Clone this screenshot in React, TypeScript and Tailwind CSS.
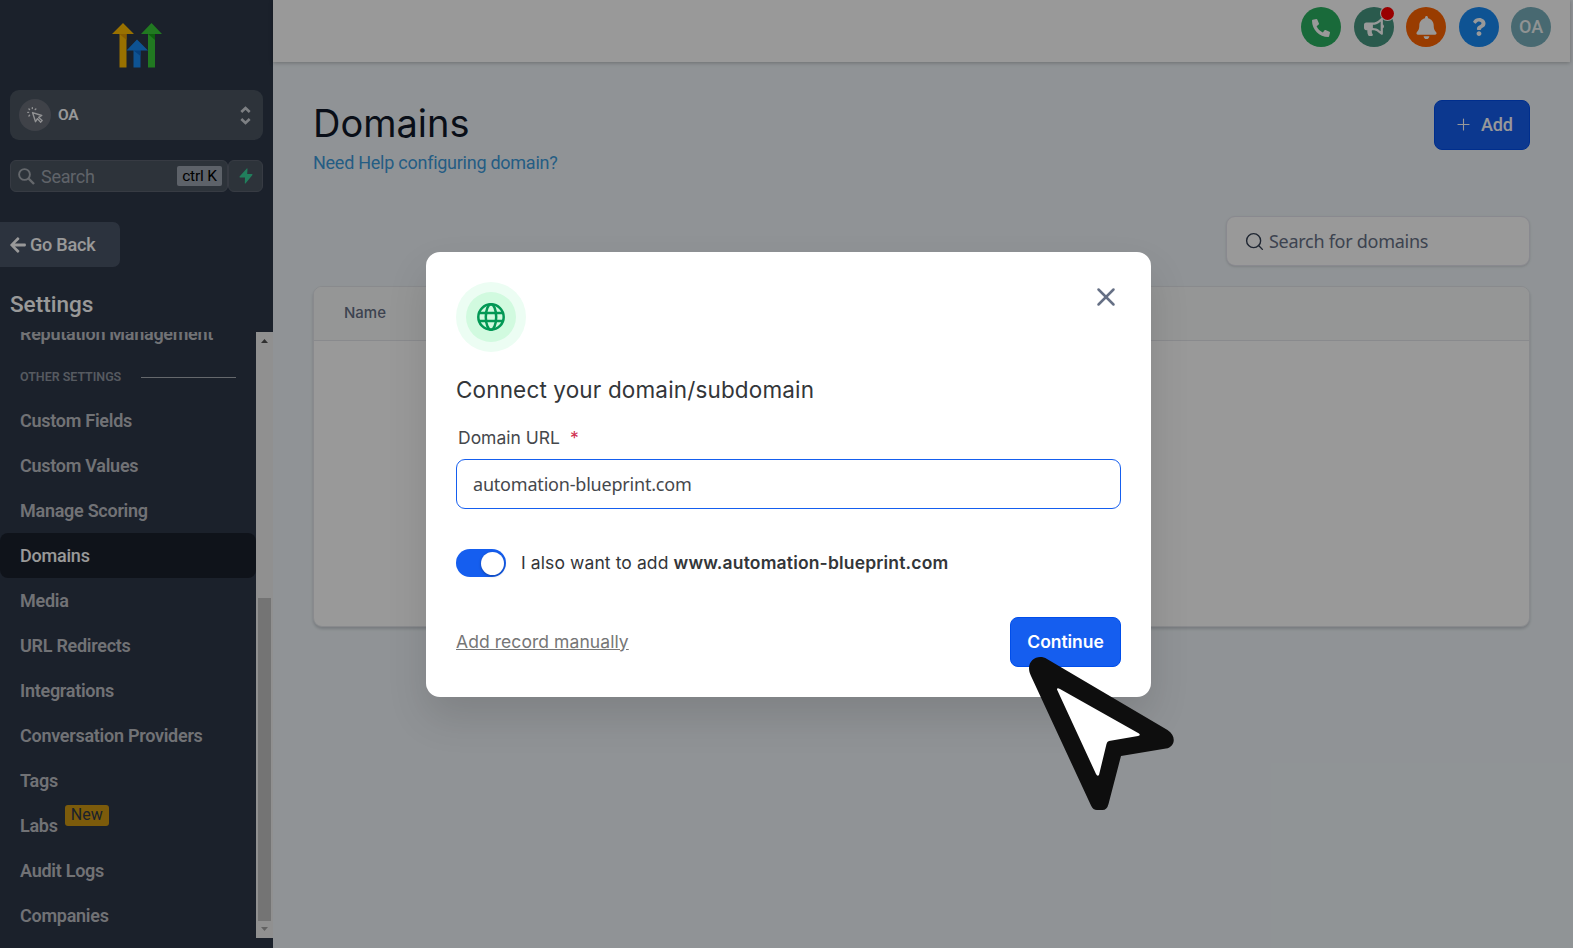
import React from "react";
import { FaArrowLeft, FaBell, FaBullhorn, FaPhone, FaQuestion } from "react-icons/fa";
import { Plus, Search, X } from "lucide-react";

const items = [
  "Custom Fields",
  "Custom Values",
  "Manage Scoring",
  "Domains",
  "Media",
  "URL Redirects",
  "Integrations",
  "Conversation Providers",
  "Tags",
  "Labs",
  "Audit Logs",
  "Companies",
];

function Logo() {
  return (
    <svg width="50" height="46" viewBox="0 0 50 46">
      <path d="M11 0 L22 11 H14.5 V44.500 H7.5 V11 H0 Z" fill="#ffbc00" />
      <path d="M7.5 11 H14.5 V17 Z" fill="#e39a00" />
      <path d="M39.5 0 L50 11 H43 V44.500 H36 V11 H29 Z" fill="#37ca37" />
      <path d="M36 11 H43 V17 Z" fill="#16a018" />
      <path d="M25 16.5 L36 27.5 H28.5 V44.500 H21.5 V27.5 H14.5 Z" fill="#188bf6" />
      <path d="M21.5 27.5 H28.5 V33 Z" fill="#0b6bd0" />
    </svg>
  );
}

function Sidebar() {
  return (
    <aside className="flex h-full w-[273px] shrink-0 flex-col bg-[#2d3748] font-[Roboto,sans-serif]">
      <div className="flex h-[90px] shrink-0 justify-center pt-[23px]">
        <Logo />
      </div>
      <div className="mx-[10px] flex h-[50px] shrink-0 items-center rounded-[9px] bg-[#4b5662] pl-[9px] pr-3">
        <div className="flex size-8 items-center justify-center rounded-full bg-[#696e79]">
          <svg width="16" height="16" viewBox="0 0 15 15" fill="none" stroke="#f3f4f6" strokeWidth="1.300" strokeLinecap="round" strokeLinejoin="round">
            <path d="M5.200 5.200 L13.800 8 L11 9.8 L14.2 12.7 L12.7 14.2 L9.8 11 L8 13.800 Z" />
            <path d="M5 .7v.8M1.800 1.8l.6.6M.7 5h.8M1.8 8.4l.6-.6M8.3 1.8l-.6.6" />
          </svg>
        </div>
        <span className="ml-[7px] mt-px flex-1 text-[15.5px] font-semibold tracking-[-0.2px] text-white">OA</span>
        <svg width="11" height="19" viewBox="0 0 11 19" fill="none" stroke="#d1d5db" strokeWidth="2.6">
          <path d="M1.3 6 L5.5 2 L9.7 6 M1.3 13 L5.5 17 L9.7 13" />
        </svg>
      </div>
      <div className="mx-[10px] mt-5 flex h-8 shrink-0">
        <div className="flex flex-1 items-center rounded-md border border-[#5c6370] bg-[#4b5662] pl-[7px] pr-[5px]">
          <svg width="17" height="17" viewBox="0 0 17 17" fill="none" stroke="#a9adb5" strokeWidth="1.900">
            <circle cx="6.500" cy="6.500" r="5.400" />
            <path d="M10.500 10.500 L16 16" strokeWidth="2.400" />
          </svg>
          <span className="ml-[6px] flex-1 text-[18px] tracking-[-0.3px] text-[#a0a6b0]">Search</span>
          <span className="flex h-5 w-[45px] items-center justify-center rounded-[2px] bg-[#9ca3af] pt-px text-[15.5px] tracking-[-0.2px] text-black">ctrl K</span>
        </div>
        <div className="flex w-[35px] items-center justify-center rounded-md border border-[#5c6370] bg-[#4b5662]">
          <svg width="14" height="16" viewBox="0 0 14 16">
            <path d="M7.800 .4 L.6 8.600 Q.2 9.500 1.200 9.600 H6 L5.800 15.200 Q6 15.800 6.500 15.400 L13.400 7 Q13.800 6.100 12.800 6 H8.200 L8.500 .8 Q8.300 .1 7.800 .4 Z" fill="#38d399" />
          </svg>
        </div>
      </div>
      <div className="mt-[30px] flex h-[45px] w-[120px] shrink-0 items-center rounded-r-[7px] bg-[#4a5568] pl-[9px] text-white">
        <FaArrowLeft size={18} />
        <span className="ml-[3px] text-[18px] font-medium tracking-[-0.2px]">Go Back</span>
      </div>
      <div className="flex h-[65px] shrink-0 items-center pl-[10px] pt-[11px] text-[22.5px] font-medium text-white">Settings</div>
      <div className="flex h-[606px] shrink-0 overflow-hidden">
        <div className="flex w-[256px] flex-col overflow-hidden">
          <div className="-mt-[10px] flex h-[22px] shrink-0 items-center pl-5 text-[18px] font-semibold tracking-[-0.28px] text-[#bdbfc4]">
            Reputation Management
          </div>
          <div className="mt-[22px] flex h-[22px] shrink-0 items-center pl-5 pr-5 text-[12.5px] font-semibold tracking-[-0.04px]">
            <span className="w-[121px] whitespace-nowrap text-[#9096a0]">OTHER SETTINGS</span>
            <span className="h-px flex-1 bg-[#a9adb5]" />
          </div>
          <nav className="mt-[10px] flex flex-col">
            {items.map((name) => (
              <div
                key={name}
                className={
                  name === "Domains"
                    ? "flex h-[45px] items-center rounded-[8px] bg-[#1a202c] pl-5 text-[18px] font-medium tracking-[-0.22px] text-white"
                    : "flex h-[45px] items-center pl-5 text-[18px] font-semibold tracking-[-0.27px] text-[#bdbfc4]"
                }
              >
                {name}
                {name === "Labs" && (
                  <span className="-mt-[20px] ml-[7px] flex h-[21px] w-11 items-center justify-center rounded-[3px] bg-[#cf9813] pb-[2px] text-[16px] font-normal tracking-normal text-[#2d3748]">
                    New
                  </span>
                )}
              </div>
            ))}
          </nav>
        </div>
        <div className="flex w-[17px] flex-col items-center bg-[#f1f1f1]">
          <svg width="17" height="17" viewBox="0 0 17 17"><path d="M5 11 L8.5 7 L12 11 Z" fill="#505050" /></svg>
          <div className="mt-[249px] h-[323px] w-[13px] bg-[#c1c1c1]" />
          <svg width="17" height="17" viewBox="0 0 17 17"><path d="M5 6 L8.5 10 L12 6 Z" fill="#a3a3a3" /></svg>
        </div>
      </div>
    </aside>
  );
}

function TopBar() {
  return (
    <header className="mr-[3px] flex h-[62px] shrink-0 items-start justify-end bg-white pr-[19px] pt-[7px] shadow-[0_1px_4px_rgba(0,0,0,0.25)]">
      <div className="flex gap-[12.5px] text-white">
        <div className="flex size-10 items-center justify-center rounded-full bg-[#2bb161] pt-px"><FaPhone size={18} className="-scale-x-100" /></div>
        <div className="relative flex size-10 items-center justify-center rounded-full bg-[#479680]">
          <FaBullhorn size={20} />
          <span className="absolute right-0 top-0 size-[13px] rounded-full bg-[#ff0000] ring-1 ring-white" />
        </div>
        <div className="flex size-10 items-center justify-center rounded-full bg-[#ff6400] pt-px"><FaBell size={23} /></div>
        <div className="flex size-10 items-center justify-center rounded-full bg-[#188bf6]"><FaQuestion size={18} /></div>
        <div className="flex size-10 items-center justify-center rounded-full bg-[#78b0bc] pb-px font-[Roboto,sans-serif] text-[18px] font-medium text-[#f1f5f6]">OA</div>
      </div>
    </header>
  );
}

function Content() {
  return (
    <div className="flex min-w-0 flex-1 flex-col bg-[#f0f6fa]">
      <TopBar />
      <main className="pl-[40px] pr-[43px] pt-[38px]">
        <div className="flex justify-between">
          <div>
            <h1 className="font-[Inter,sans-serif] text-[38px] leading-[46px] text-[#101828]">Domains</h1>
            <a className="block pt-px font-[Roboto,sans-serif] text-[18px] leading-[31px] tracking-[-0.26px] text-[#3d9bdc]">Need Help configuring domain?</a>
          </div>
          <button className="flex h-[50px] w-[96px] items-center rounded-[8px] border border-[#004eeb] bg-[#155eef] pb-px pl-[19px] font-[Roboto,sans-serif] text-[18px] font-medium text-white">
            <Plus size={19} strokeWidth={1.4} />
            <span className="ml-[8px] tracking-[-0.2px]">Add</span>
          </button>
        </div>
        <div className="mt-[38px] flex justify-end">
          <div className="flex h-[50px] w-[304px] items-center rounded-[9px] border border-[#e4e4ee] bg-white pl-[17px] shadow-sm">
            <Search size={21} strokeWidth={1.6} className="text-[#344054]" />
            <span className="ml-[4px] font-['Noto_Sans',sans-serif] text-[18px] tracking-[-0.28px] text-[#667085]">Search for domains</span>
          </div>
        </div>
        <div className="mt-5 h-[341px] overflow-hidden rounded-[9px] border border-[#e4e7ec] bg-white shadow-[0_2px_3px_rgba(16,24,40,0.18)]">
          <div className="flex h-[54px] items-center border-b border-[#e4e7ec] bg-[#f9fafb] pl-[30px] font-[Inter,sans-serif] text-[15px] font-medium text-[#667085]">
            Name
          </div>
        </div>
      </main>
    </div>
  );
}

function Dialog() {
  return (
    <div className="flex h-[445px] w-[725px] flex-col rounded-[14px] bg-white px-[30px] pt-[30px] font-[Inter,sans-serif] text-[#333639] shadow-[0_20px_40px_rgba(0,0,0,0.12)]">
      <div className="flex justify-between">
        <div className="flex size-[70px] items-center justify-center rounded-full bg-[#ecfdf3]">
          <div className="flex size-[50px] items-center justify-center rounded-full bg-[#d1fadf]">
            <svg width="28" height="28" viewBox="0 0 28 28" fill="none" stroke="#039855" strokeWidth="2.5">
              <circle cx="14" cy="14" r="12.700" />
              <ellipse cx="14" cy="14" rx="5.2" ry="12.700" />
              <path d="M2 10H26M2 18H26" />
            </svg>
          </div>
        </div>
        <X size={30} strokeWidth={2} className="text-[#667085]" />
      </div>
      <h2 className="mt-[21px] text-[22.5px] leading-[34px] tracking-[0.15px]">Connect your domain/subdomain</h2>
      <div className="ml-[2px] mt-[20px] flex text-[17.5px] leading-[22px] text-[#45484c]">
        Domain URL <span className="ml-[10px] text-[#d03050]">*</span>
      </div>
      <div className="mt-[10px] flex h-[50px] shrink-0 items-center rounded-[9px] border border-[#155eef] pl-[16px] font-['Noto_Sans',sans-serif] text-[18px] tracking-[-0.2px] text-[#45484c]">
        automation-blueprint.com
      </div>
      <div className="mt-[40px] flex h-7 items-center">
        <div className="flex h-7 w-[50px] items-center justify-end rounded-full bg-[#155eef] pr-[2px]">
          <div className="size-[23px] rounded-full bg-white shadow-[0_1px_3px_rgba(0,0,0,0.3)]" />
        </div>
        <div className="ml-[15px] text-[17.5px] tracking-[0.1px]">
          I also want to add <b className="font-semibold tracking-[0.17px]">www.automation-blueprint.com</b>
        </div>
      </div>
      <div className="mt-10 flex items-center justify-between">
        <a className="text-[17.5px] tracking-[0.07px] text-[#767676] underline">Add record manually</a>
        <button className="h-[50px] w-[111px] rounded-[8px] border border-[#004eeb] bg-[#155eef] text-[17.5px] font-semibold tracking-[-0.05px] text-white">Continue</button>
      </div>
    </div>
  );
}

export default function App() {
  return (
    <div className="relative flex h-[948px] w-[1573px] overflow-hidden">
      <Sidebar />
      <Content />
      <div className="absolute inset-0 flex items-start justify-start bg-black/40 pl-[426px] pt-[252px]">
        <Dialog />
      </div>
      <svg className="absolute left-[1020px] top-[650px]" width="160" height="165" viewBox="0 0 160 165">
        <path
          d="M27 9 L147.500 80 C157 86 155 97 146 98.500 L101 106 L88.500 154 Q87 160 82.500 160 H77 Q73 160 71 155.500 L11 26 C4 12 17 3 27 9 Z"
          fill="#0e0e0e"
        />
        <path d="M37 39.500 Q37 37.500 40 39 L119 83.500 Q121 85.500 118 86 L89 91 Q87 91.500 86.500 94 L79 125 Q77.500 127 76 124 Z" fill="#fff" />
      </svg>
    </div>
  );
}
